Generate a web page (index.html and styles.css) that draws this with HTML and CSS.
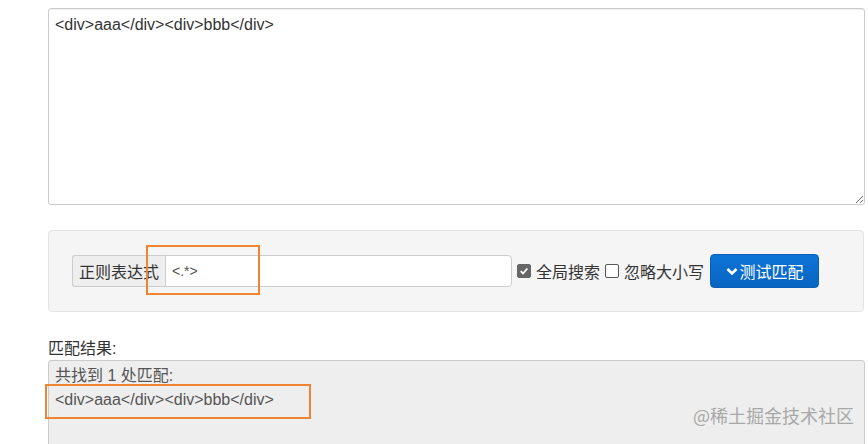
FILE: index.html
```html
<!DOCTYPE html>
<html>
<head>
<meta charset="utf-8">
<link rel="stylesheet" href="styles.css">
</head>
<body>
<div class="page">
  <textarea class="source">&lt;div&gt;aaa&lt;/div&gt;&lt;div&gt;bbb&lt;/div&gt;</textarea>
  <div class="panel">
    <div class="group">
      <span class="addon">正则表达式</span>
      <input class="regex" type="text" value="&lt;.*&gt;">
    </div>
    <label class="opt"><span class="box checked"><svg viewBox="0 0 12 12" width="10" height="10"><path d="M2 6.2 L4.8 9 L10 3" fill="none" stroke="#fff" stroke-width="2.2"/></svg></span>全局搜索</label>
    <label class="opt"><span class="box"></span>忽略大小写</label>
    <button class="btn"><svg viewBox="0 0 12 12" width="12" height="12"><path d="M1.5 4 L6 8.5 L10.5 4" fill="none" stroke="#fff" stroke-width="2.6"/></svg>测试匹配</button>
  </div>
  <div class="result-label">匹配结果:</div>
  <div class="result">
    <div class="count">共找到 1 处匹配:</div>
    <div class="match">&lt;div&gt;aaa&lt;/div&gt;&lt;div&gt;bbb&lt;/div&gt;</div>
  </div>
  <div class="mark mark-1"></div>
  <div class="mark mark-2"></div>
  <div class="watermark">@稀土掘金技术社区</div>
</div>
</body>
</html>
```
FILE: styles.css
```css
html, body {
  margin: 0;
  padding: 0;
  background: #fff;
  overflow: hidden;
}
.page {
  position: relative;
  width: 868px;
  height: 444px;
  overflow: hidden;
  padding: 8px 0 0 48px;
  box-sizing: border-box;
  font-family: "Liberation Sans", "Noto Sans CJK SC", sans-serif;
  color: #333;
  font-size: 14px;
}
.source {
  display: block;
  width: 817px;
  height: 197px;
  box-sizing: border-box;
  margin: 0;
  padding: 6px 6px;
  border: 1px solid #ccc;
  border-radius: 3px;
  font-family: "Liberation Sans", "Noto Sans CJK SC", sans-serif;
  font-size: 16px;
  line-height: 20px;
  color: #333;
  resize: both;
  box-shadow: inset 0 1px 1px rgba(0,0,0,.06);
}
.panel {
  margin-top: 25px;
  width: 816px;
  height: 82px;
  box-sizing: border-box;
  background: #f5f5f5;
  border: 1px solid #e3e3e3;
  border-radius: 4px;
  display: flex;
  align-items: center;
  padding: 0 0 0 23px;
}
.group {
  display: flex;
  height: 32px;
}
.addon {
  display: flex;
  align-items: center;
  padding: 0 6px;
  background: #eee;
  border: 1px solid #ccc;
  border-right: 0;
  border-radius: 3px 0 0 3px;
  font-size: 16px;
  color: #333;
  width: 80px;
}
.regex {
  width: 347px;
  height: 32px;
  box-sizing: border-box;
  border: 1px solid #ccc;
  border-radius: 0 4px 4px 0;
  padding: 0 6px;
  font-family: "Liberation Sans", sans-serif;
  font-size: 14px;
  color: #555;
  margin: 0;
  outline: none;
}
.opt {
  display: flex;
  align-items: center;
  font-size: 16px;
  color: #333;
  margin-left: 5px;
  gap: 5px;
}
.box {
  width: 14px;
  height: 14px;
  box-sizing: border-box;
  border: 1px solid #555;
  border-radius: 2px;
  background: #fff;
  display: flex;
  align-items: center;
  justify-content: center;
}
.box.checked {
  background: #666;
  border-color: #666;
}
.btn {
  margin-left: 6px;
  height: 34px;
  width: 109px;
  border: 1px solid #0b5fb8;
  border-radius: 4px;
  background: linear-gradient(#0d74d6, #0865c2);
  color: #fff;
  font-family: "Liberation Sans", "Noto Sans CJK SC", sans-serif;
  font-size: 16px;
  display: flex;
  align-items: center;
  justify-content: center;
  gap: 2px;
  padding: 0;
}
.result-label {
  margin-top: 28px;
  font-size: 16px;
  color: #333;
  line-height: 18px;
}
.result {
  margin-top: 2px;
  width: 817px;
  height: 120px;
  box-sizing: border-box;
  background: #eee;
  border: 1px solid #ccc;
  border-radius: 3px;
  padding: 6px 6px;
  color: #555;
  font-size: 16px;
}
.count {
  line-height: 18px;
}
.match {
  margin-top: 6px;
  font-size: 16px;
  line-height: 18px;
}
.mark {
  position: absolute;
  border: 2px solid #ef8532;
  box-sizing: border-box;
}
.mark-1 {
  left: 146px;
  top: 245px;
  width: 114px;
  height: 50px;
}
.mark-2 {
  left: 45px;
  top: 384px;
  width: 266px;
  height: 35px;
}
.watermark {
  position: absolute;
  left: 693px;
  top: 402px;
  font-size: 18px;
  color: #a8a8a8;
  font-family: "Noto Sans CJK SC", sans-serif;
}
```
